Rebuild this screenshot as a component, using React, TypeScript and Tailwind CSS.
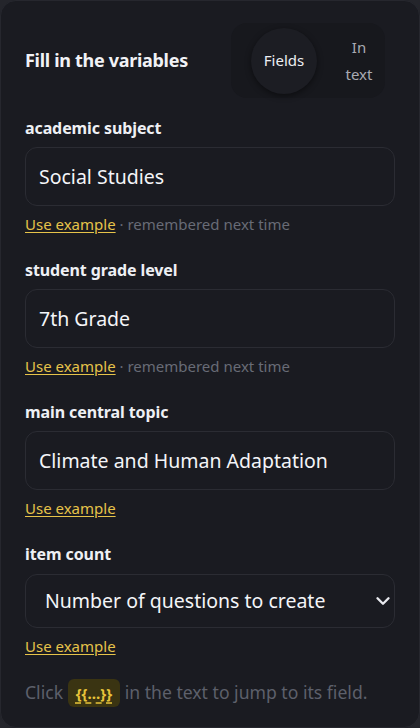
import { ChevronDown } from "lucide-react";

const fields = [
  { label: "academic subject", value: "Social Studies", remembered: true },
  { label: "student grade level", value: "7th Grade", remembered: true },
  { label: "main central topic", value: "Climate and Human Adaptation", remembered: false },
];

function UseExample({ remembered }: { remembered?: boolean }) {
  return (
    <div className="mt-2 text-[15px] leading-5">
      <span className="text-[#e6c34a] underline underline-offset-2 decoration-1">Use example</span>
      {remembered && <span className="text-[#686b76]"> · remembered next time</span>}
    </div>
  );
}

export default function App() {
  return (
    <div className="min-h-screen bg-[#24252b] font-['Noto_Sans',sans-serif]">
      <div className="h-[728px] w-[420px] rounded-2xl border border-[#26272e] bg-[#1a1b21] px-6 pt-[22px]">
        {/* HEADER */}
        <div className="flex items-center justify-between">
          <h2 className="text-[18px] font-bold tracking-[-0.3px] text-[#f1f2f6]">
            Fill in the variables
          </h2>
          <div className="mr-[10px] flex h-[75px] w-[154px] items-center rounded-2xl bg-[#17181d] pl-[20px]">
            <div className="flex h-[66px] w-[66px] items-center justify-center rounded-full bg-[#1c1d23] text-[15px] text-[#eceef2] shadow-[0_2px_6px_rgba(0,0,0,0.45)]">
              Fields
            </div>
            <div className="ml-[22px] flex w-[40px] flex-col items-center text-[15px] leading-[27px] text-[#a9abb3]">
              <span>In</span>
              <span>text</span>
            </div>
          </div>
        </div>

        {/* FIELDS */}
        <div className="mt-[20px] flex flex-col">
          {fields.map((f) => (
            <div key={f.label} className="h-[142px]">
              <div className="text-[16px] font-bold leading-5 tracking-[-0.1px] text-[#eef0f4]">{f.label}</div>
              <div className="mt-[9px] flex h-[59px] items-center rounded-xl border border-[#2b2c33] bg-[#1a1b21] px-[13px] text-[19.5px] text-[#f4f5f8]">
                {f.value}
              </div>
              <UseExample remembered={f.remembered} />
            </div>
          ))}

          <div>
            <div className="text-[16px] font-bold leading-5 tracking-[-0.1px] text-[#eef0f4]">item count</div>
            <div className="mt-[10px] flex h-[54px] items-center justify-between rounded-xl border border-[#2b2c33] bg-[#1a1b21] pl-[19px] pr-0 text-[19.5px] text-[#f4f5f8]">
              <span>Number of questions to create</span>
              <ChevronDown size={22} strokeWidth={2.6} className="text-[#e8e9ee]" />
            </div>
            <UseExample />
          </div>
        </div>

        {/* FOOTER */}
        <p className="mt-[23px] text-[17.6px] text-[#5d606b]">
          Click{" "}
          <span className="rounded-md bg-[#3a3412] px-[8px] py-[4px] text-[15px] font-bold text-[#e8c43a] underline decoration-dashed underline-offset-4">
            {"{{…}}"}
          </span>{" "}
          in the text to jump to its field.
        </p>
      </div>
    </div>
  );
}
